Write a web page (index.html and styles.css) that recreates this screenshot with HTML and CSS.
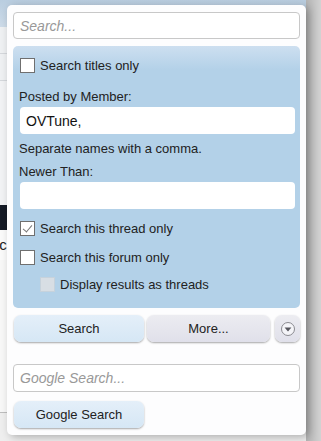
FILE: index.html
```html
<!DOCTYPE html>
<html lang="en">
<head>
  <meta charset="UTF-8" />
  <meta name="viewport" content="width=device-width, initial-scale=1.0"/>
  <title>Search</title>
  <link rel="stylesheet" href="styles.css">
</head>
<body>

<div class="page">
  <div class="page-main">
    <div class="page-head"></div>
    <div class="page-row"></div>
    <div class="page-row"></div>
    <div class="page-gap"></div>
    <div class="page-dark"></div>
    <div class="page-text">ic</div>
    <div class="page-fill"></div>
    <div class="page-foot"></div>
  </div>
  <div class="page-side"></div>
</div>

<form class="popup" onsubmit="return false">
  <input type="text" class="text-input" placeholder="Search..." />

  <div class="filters">
    <label class="check-row">
      <span class="check"></span>Search titles only
    </label>

    <div class="field-label first">Posted by Member:</div>
    <input type="text" class="text-input plain" value="OVTune," />
    <div class="field-label">Separate names with a comma.</div>

    <div class="field-label">Newer Than:</div>
    <input type="text" class="text-input plain" />

    <label class="check-row thread">
      <span class="check checked"></span>Search this thread only
    </label>
    <label class="check-row forum">
      <span class="check"></span>Search this forum only
    </label>
    <label class="check-row sub">
      <span class="check disabled"></span>Display results as threads
    </label>
  </div>

  <div class="button-row">
    <button class="btn primary">Search</button>
    <button class="btn more">More...</button>
    <button class="btn round">
      <svg width="16" height="16" viewBox="0 0 16 16">
        <circle cx="8" cy="8" r="6.5" fill="#f4f4f8" stroke="#8a8a90" stroke-width="1"/>
        <path d="M4.6 6.6 L11.4 6.6 L8 10.4 Z" fill="#55555c"/>
      </svg>
    </button>
  </div>

  <input type="text" class="text-input google" placeholder="Google Search..." />
  <button class="btn primary google-btn">Google Search</button>
</form>

</body>
</html>
```

FILE: styles.css
```css
body {
  margin: 0;
  font-family: 'Liberation Sans', Arial, sans-serif;
  font-size: 13px;
  color: #222;
  background: #eceef1;
  width: 321px;
  height: 441px;
  overflow: hidden;
  position: relative;
}
.page {
  display: flex;
  height: 441px;
}
.page-main {
  flex: 1;
  display: flex;
  flex-direction: column;
}
.page-head {
  height: 27px;
  background: linear-gradient(#b9cde0, #cddbe8);
}
.page-row {
  height: 26px;
  border-bottom: 1px solid #d4d7db;
  background: #eef0f2;
}
.page-gap {
  height: 124px;
  background: #f1f2f4;
}
.page-dark {
  height: 25px;
  background: #141a26;
}
.page-text {
  height: 30px;
  line-height: 30px;
  font-size: 15px;
  margin-left: -4px;
  color: #222;
  background: #fafafa;
}
.page-fill {
  flex: 1;
  background: #f7f7f7;
  border-bottom: 1px solid #bdbdbd;
}
.page-foot {
  height: 28px;
  background: #eeeeee;
}
.page-side {
  width: 15px;
  background: linear-gradient(90deg, #b4b4b4, #d2d2d2);
}

/* search popup */
.popup {
  position: absolute;
  left: 7px;
  top: 5px;
  width: 287px;
  height: 416px;
  padding: 7px 6px;
  background: #fdfdfe;
  border-radius: 5px;
  box-shadow: 3px 2px 8px rgba(0,0,0,0.28);
  display: flex;
  flex-direction: column;
}
.text-input {
  box-sizing: border-box;
  width: 100%;
  height: 27px;
  margin: 0;
  padding: 0 6px;
  border: 1px solid #c8c8c8;
  border-radius: 4px;
  background: #fff;
  font-family: 'Liberation Sans', Arial, sans-serif;
  font-size: 14px;
  color: #111;
  outline: none;
}
.text-input::placeholder {
  color: #999;
  font-style: italic;
}
.filters {
  margin-top: 7px;
  padding: 11px 5px 15px 6px;
  background: linear-gradient(#cddff0, #b3d1e8 24px, #b3d1e8);
  border-radius: 5px;
  display: flex;
  flex-direction: column;
}
.text-input.plain {
  width: auto;
  margin: 2px 0 0 1px;
  border: none;
  border-radius: 4px;
}
.field-label {
  line-height: 17px;
  margin-top: 6px;
}
.field-label.first {
  margin-top: 14px;
}
.check-row {
  display: flex;
  align-items: center;
  height: 17px;
  gap: 5px;
  padding-left: 1px;
}
.check-row.thread { margin-top: 11px; }
.check-row.forum { margin-top: 12px; }
.check-row.sub { margin-top: 10px; padding-left: 21px; }
.check {
  box-sizing: border-box;
  width: 15px;
  height: 15px;
  border: 1px solid #6f6f6f;
  background: #fff;
  position: relative;
}
.check.checked::after {
  content: '';
  position: absolute;
  left: 4px;
  top: 1px;
  width: 4px;
  height: 8px;
  border-right: 1px solid #777;
  border-bottom: 1px solid #777;
  transform: rotate(40deg);
}
.check.disabled {
  border-color: #c6d2dc;
  background: #d8dee4;
}

/* buttons */
.button-row {
  display: flex;
  gap: 3px;
  margin-top: 7px;
  padding-left: 1px;
}
.btn {
  height: 27px;
  border: none;
  border-radius: 7px;
  font-family: 'Liberation Sans', Arial, sans-serif;
  font-size: 13px;
  color: #222;
  cursor: pointer;
  box-shadow: 0 1px 2px rgba(0,0,0,0.35);
}
.btn.primary {
  width: 130px;
  background: linear-gradient(#e4eff9, #d6e7f5);
}
.btn.more {
  width: 123px;
  background: linear-gradient(#ececf1, #e0e0ea);
}
.btn.round {
  width: 25px;
  margin-left: 2px;
  padding: 0;
  display: flex;
  align-items: center;
  justify-content: center;
  background: linear-gradient(#ececf1, #e0e0ea);
}
.text-input.google {
  height: 28px;
  margin-top: 22px;
}
.google-btn {
  margin-top: 9px;
  margin-left: 1px;
}
```
